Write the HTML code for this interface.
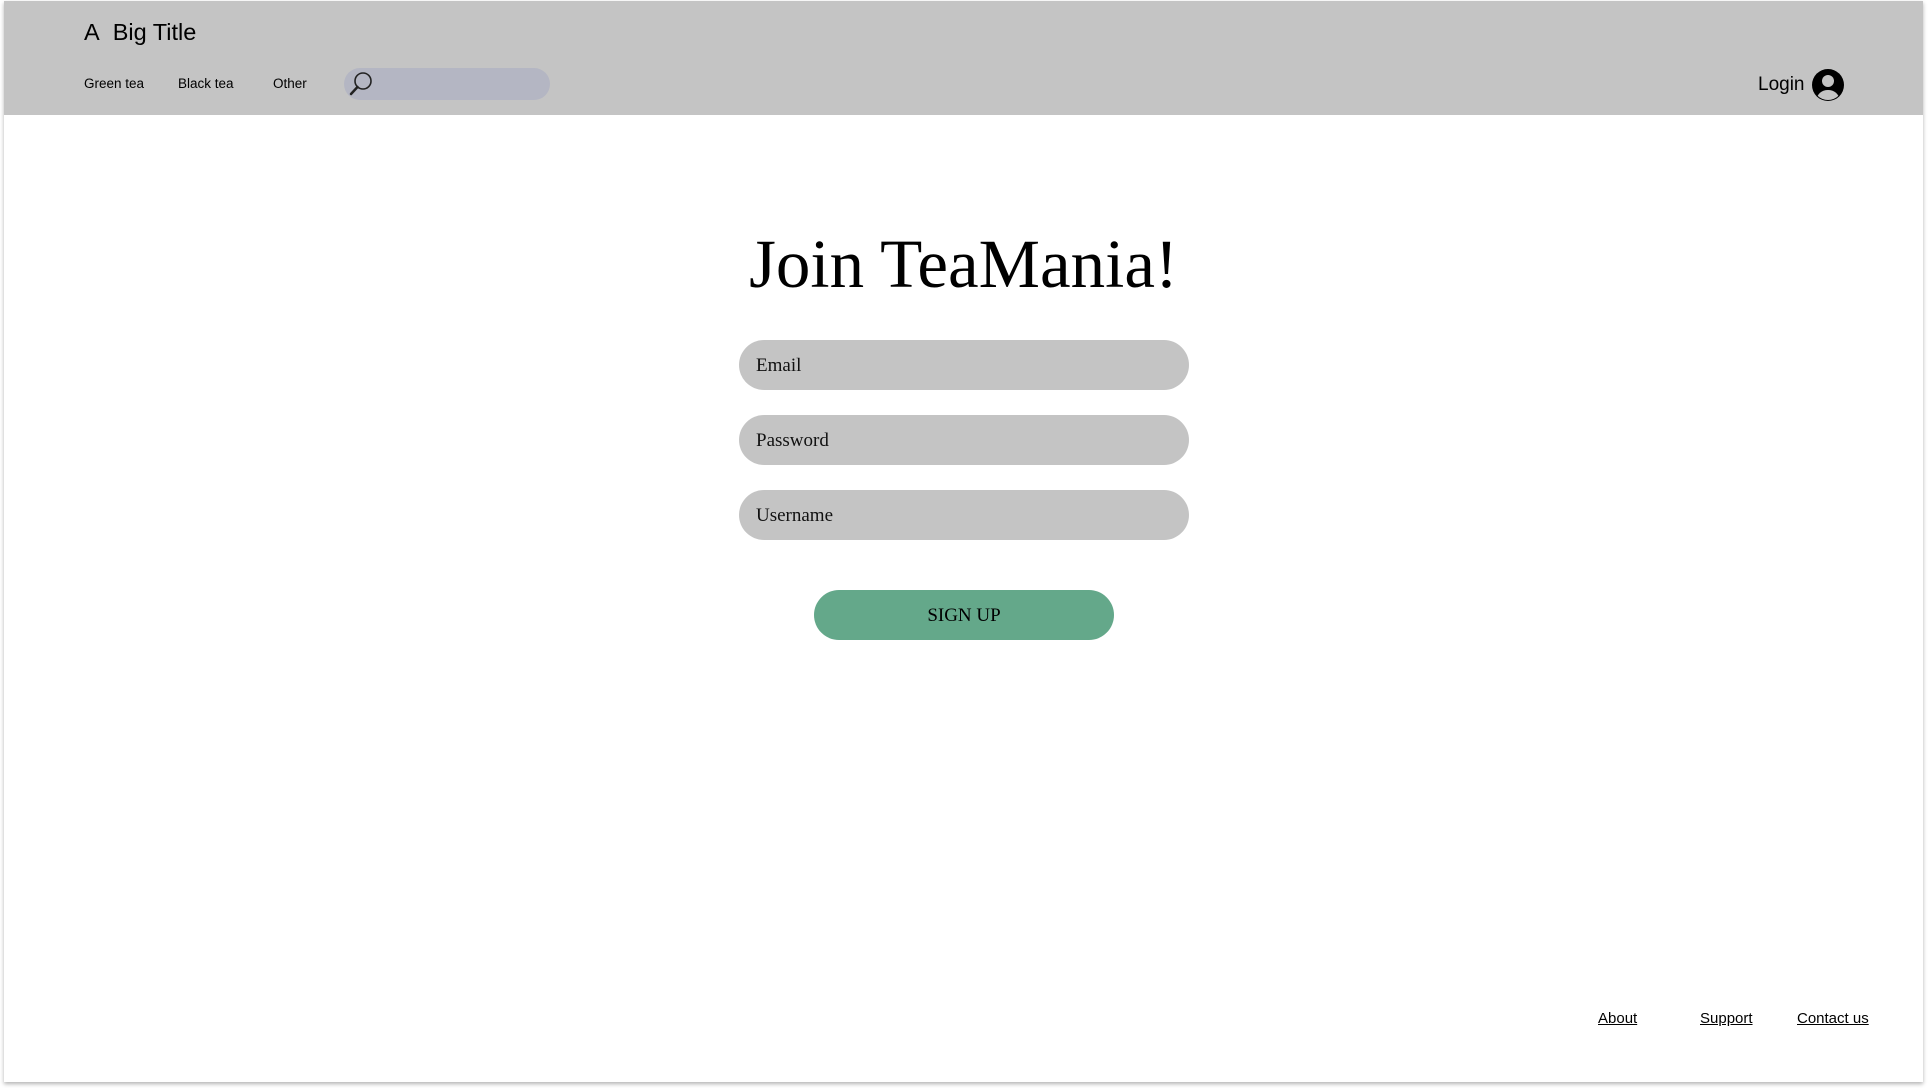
<!DOCTYPE html>
<html><head><style>
html,body{margin:0;padding:0;width:1928px;height:1088px;background:#fff;overflow:hidden;font-family:"Liberation Sans",sans-serif;}
.frame{position:absolute;left:4px;top:1px;width:1919px;height:1081px;background:#fff;box-shadow:0 2px 4px rgba(0,0,0,.3);}
.hdr{position:absolute;left:0;top:0;width:1919px;height:114px;background:#c4c4c4;}
.t{position:absolute;color:#000;white-space:nowrap}
.pill{position:absolute;border-radius:25px;background:#c4c4c4;}
.ph{position:absolute;left:17px;top:1px;line-height:49px;font-family:"Liberation Serif",serif;font-size:19px;color:#111}
.f{position:absolute;top:1009px;font-size:15px;text-decoration:underline;color:#000}
</style></head><body>
<div class="frame">
<div class="hdr">
<div class="t" style="left:80px;top:18px;font-size:23.5px;">A&nbsp; Big Title</div>
<div class="t" style="left:80px;top:75px;font-size:13.5px;">Green tea</div>
<div class="t" style="left:174px;top:75px;font-size:13.5px;">Black tea</div>
<div class="t" style="left:269px;top:75px;font-size:13.5px;">Other</div>
<div style="position:absolute;left:340px;top:67px;width:206px;height:32px;border-radius:16px;background:#b4b6c3;"></div>
<svg style="position:absolute;left:342px;top:69px" width="28" height="28" viewBox="0 0 28 28"><circle cx="17" cy="11" r="8" fill="none" stroke="#222" stroke-width="1.6"/><path d="M11.5 17 L5 24" stroke="#222" stroke-width="2.5" stroke-linecap="round"/></svg>
<div class="t" style="left:1754px;top:73px;font-size:19px;">Login</div>
<svg style="position:absolute;left:1807px;top:67px" width="34" height="34" viewBox="0 0 34 34"><defs><clipPath id="c"><circle cx="17" cy="17" r="15"/></clipPath></defs><circle cx="17" cy="17" r="16" fill="#000"/><g clip-path="url(#c)"><circle cx="17" cy="13" r="6" fill="#c4c4c4"/><ellipse cx="17" cy="31" rx="11" ry="9" fill="#c4c4c4"/></g></svg>
</div>
<div class="t" style="left:0;width:1919px;text-align:center;top:224px;font-family:'Liberation Serif',serif;font-size:69px;">Join TeaMania!</div>
<div class="pill" style="left:735px;top:339px;width:450px;height:50px;"><span class="ph">Email</span></div>
<div class="pill" style="left:735px;top:414px;width:450px;height:50px;"><span class="ph">Password</span></div>
<div class="pill" style="left:735px;top:489px;width:450px;height:50px;"><span class="ph">Username</span></div>
<div class="pill" style="left:810px;top:589px;width:300px;height:50px;background:#64a88a;text-align:center;line-height:52px;font-family:'Liberation Serif',serif;font-size:19px;">SIGN UP</div>
<div class="f" style="left:1594px;">About</div>
<div class="f" style="left:1696px;">Support</div>
<div class="f" style="left:1793px;">Contact us</div>
</div>
</body></html>
